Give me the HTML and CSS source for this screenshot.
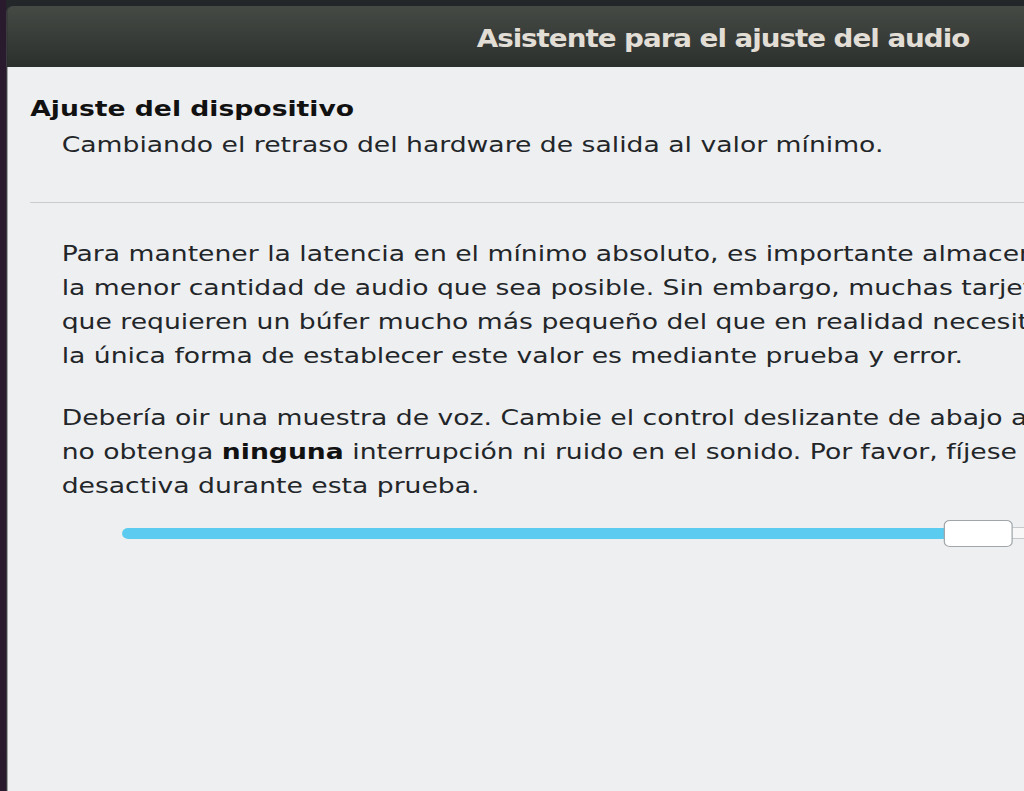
FILE: index.html
```html
<!DOCTYPE html>
<html lang="es">
<head>
    <meta charset="UTF-8">
    <meta name="viewport" content="width=device-width, initial-scale=1.0">
    <title>Asistente para el ajuste del audio</title>
    <link rel="stylesheet" href="styles.css">
</head>
<body>
    <div class="desktop">
        <div class="window">
            <div class="titlebar">
                <span class="title">Asistente para el ajuste del audio</span>
            </div>
            <div class="content">
                <div class="page-header">
                    <div class="page-title">Ajuste del dispositivo</div>
                    <div class="page-subtitle">Cambiando el retraso del hardware de salida al valor mínimo.</div>
                </div>
                <div class="separator"></div>
                <div class="body-text">
                    <p>Para mantener la latencia en el mínimo absoluto, es importante almacenar en el búfer<br>
                    la menor cantidad de audio que sea posible. Sin embargo, muchas tarjetas de sonido<br>
                    que requieren un búfer mucho más pequeño del que en realidad necesitan,<br>
                    la única forma de establecer este valor es mediante prueba y error.</p>
                    <p>Debería oir una muestra de voz. Cambie el control deslizante de abajo al valor<br>
                    no obtenga <b>ninguna</b> interrupción ni ruido en el sonido. Por favor, fíjese en que<br>
                    desactiva durante esta prueba.</p>
                </div>
                <div class="slider">
                    <div class="slider-fill"></div>
                    <div class="slider-handle"></div>
                    <div class="slider-rest"></div>
                </div>
            </div>
        </div>
    </div>
</body>
</html>
```

FILE: styles.css
```css
body, html {
    height: 100%;
    margin: 0;
    overflow: hidden;
}

.desktop {
    height: 100%;
    background: #24272a;
    padding-top: 6px;
    box-sizing: border-box;
    display: flex;
    flex-direction: column;
    position: relative;
}

.desktop::before {
    content: "";
    position: absolute;
    left: 0;
    top: 0;
    bottom: 0;
    width: 6px;
    background: #2a1a2e;
}

/* the whole window is drawn a bit wider than its layout box */
.window {
    flex: 1;
    margin-left: 6px;
    width: 1100px;
    display: flex;
    flex-direction: column;
    border-left: 1px solid #3b3b3e;
    border-radius: 6px 0 0 0;
    overflow: hidden;
    transform: scaleX(1.21);
    transform-origin: 0 0;
}

.titlebar {
    height: 61px;
    flex-shrink: 0;
    background: linear-gradient(180deg, #454a45 0%, #2c302d 100%);
    display: flex;
    align-items: center;
    padding-left: 388px;
}

.title {
    font-family: "DejaVu Sans Condensed", "DejaVu Sans", sans-serif;
    font-weight: bold;
    font-size: 25.5px;
    letter-spacing: -0.85px;
    color: #e2ded6;
    padding-top: 2px;
}

.content {
    flex: 1;
    background: #eeeff1;
    padding-top: 24px;
    font-family: "DejaVu Sans", sans-serif;
    font-size: 22px;
    color: #232629;
}

.page-header {
    padding-left: 19px;
}

.page-title {
    font-weight: bold;
    line-height: 36px;
    color: #111;
}

.page-subtitle {
    line-height: 36px;
    padding-left: 26px;
}

.separator {
    height: 1px;
    background: #c9cbcd;
    margin: 39px 0 0 19px;
}

.body-text {
    padding-left: 45px;
    padding-top: 34px;
    white-space: nowrap;
}

.body-text p {
    margin: 0 0 28px 0;
    line-height: 34px;
}

.body-text p:last-child {
    margin-bottom: 0;
}

.body-text b {
    color: #111;
}

.slider {
    display: flex;
    align-items: center;
    height: 28px;
    margin-top: 16px;
    padding-left: 95px;
}

.slider-fill {
    width: 681px;
    height: 11px;
    background: #5bcbef;
    border-radius: 5px 0 0 5px;
    margin-right: -2px;
}

.slider-handle {
    width: 55px;
    height: 25px;
    background: #fff;
    border: 1px solid #9fa5a8;
    border-radius: 5px;
    position: relative;
    z-index: 1;
}

.slider-rest {
    width: 200px;
    height: 10px;
    background: #f7f7f8;
    border: 1px solid #c6c9cc;
    margin-left: -2px;
}
```
